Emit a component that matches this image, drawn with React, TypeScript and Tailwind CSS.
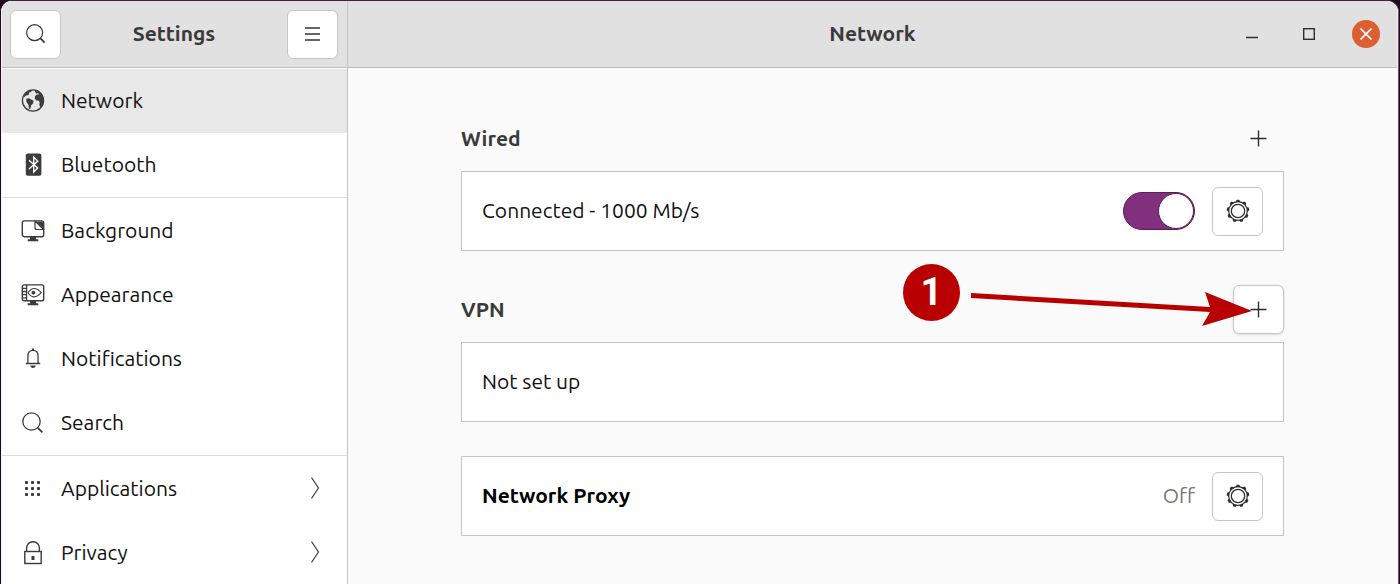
import type { ReactNode } from 'react'

const TOOL_BUTTON =
  'flex h-[49px] w-[51px] shrink-0 items-center justify-center rounded-md border border-[#c6c6c6] bg-white text-[#333] hover:bg-gray-50'

function SearchIcon({ className }: { className?: string }) {
  return (
    <svg viewBox="0 0 24 24" className={className} fill="none" stroke="currentColor">
      <circle cx="10.5" cy="10.5" r="8.7" strokeWidth="1.3" />
      <path d="M16.8 16.8l4.6 4.6" strokeWidth="1.8" />
    </svg>
  )
}

function GlobeIcon() {
  return (
    <svg viewBox="0 0 24 24" className="h-6 w-6" fill="none">
      <circle cx="12" cy="11.5" r="10.6" stroke="currentColor" strokeWidth="1.3" />
      <path
        fill="currentColor"
        d="M3 6.7C4.7 3.5 8 1.2 11.6 .9L10 2.7 7.8 4l.4 1.2-1.6 1.1-2.1.4L2.6 9.1zM5.2 9.7l2.6-.4 1.9.9 2.9 1.6-.6 2.8-1.8 1.7-1 3.9-1.3-.7-.5-3.9-1.9-2.4zM14 1.5l2.8.4c2.3 1.2 4.2 3 5.1 5.3l.8 4-.8 4.5-2.2 3-1.4-2.6.4-2.9-1.3-1.7-2.2.1-1.5-2.3.5-2.4 1.7-1.3 1.9-.1-.3-1.4-2.2.3-1.2-1.4z"
      />
    </svg>
  )
}

function BluetoothIcon() {
  return (
    <svg viewBox="0 0 24 24" className="h-6 w-6" fill="none">
      <rect x="4.8" y="0.4" width="15.6" height="22.4" rx="2" fill="currentColor" />
      <path d="M8 7.3l8.7 7.8-4 4V4.1l4 4L8 15.9" stroke="#fff" strokeWidth="1.4" />
    </svg>
  )
}

function BackgroundIcon() {
  return (
    <svg viewBox="0 0 24 24" className="h-6 w-6" fill="none" stroke="currentColor">
      <rect x="1.3" y="1.9" width="21.4" height="15.8" rx="2" strokeWidth="1.4" />
      <path d="M14 2V8.5q0 2 2 2h6.5z" fill="#fff" strokeWidth="1.2" />
      <path d="M15 2.5l7 7V3.5l-1-1z" fill="currentColor" stroke="none" />
      <path d="M9 18h6v2.3h2.3v2H6.7v-2H9z" fill="currentColor" stroke="none" />
    </svg>
  )
}

function AppearanceIcon() {
  return (
    <svg viewBox="0 0 24 24" className="h-6 w-6" fill="none" stroke="currentColor">
      <rect x="1.3" y="1.9" width="21.4" height="15.8" rx="1.8" strokeWidth="1.4" />
      <path d="M5.6 1.9v15.8M1.3 5.3h4.3M1.3 8.5h4.3M1.3 11.7h4.3M1.3 14.9h4.3" strokeWidth="1.3" />
      <path d="M7 9.7q5.8-8.4 13.2 0q-7.4 8.4-13.2 0z" strokeWidth="1.1" />
      <circle cx="12.4" cy="9.7" r="1.5" fill="currentColor" />
      <path d="M9 18h6v2.3h2.3v2H6.7v-2H9z" fill="currentColor" stroke="none" />
    </svg>
  )
}

function BellIcon() {
  return (
    <svg viewBox="0 0 24 24" className="h-6 w-6" fill="none" stroke="currentColor">
      <path d="M4.8 16.5h14.4M6.9 16.5V8.7c0-3.2 2-5.4 5.1-5.4s5.1 2.2 5.1 5.4v7.8" strokeWidth="1.3" />
      <path d="M12 1.5v2" strokeWidth="2.2" />
      <path d="M9.2 18.5h5.6q-.6 2.5-2.8 2.5t-2.8-2.5z" fill="currentColor" stroke="none" />
    </svg>
  )
}

function AppsIcon() {
  return (
    <svg viewBox="0 0 24 24" className="h-6 w-6" fill="currentColor">
      {[4, 10, 16].map((y) =>
        [4, 10, 16].map((x) => <rect key={`${x}-${y}`} x={x} y={y} width="3" height="3" rx="0.8" />)
      )}
    </svg>
  )
}

function LockIcon() {
  return (
    <svg viewBox="0 0 24 24" className="h-6 w-6" fill="none" stroke="currentColor" strokeWidth="1.4">
      <rect x="3.8" y="10.5" width="16.4" height="12" />
      <path d="M5.6 10.5V7.1a6.4 6.4 0 0 1 12.8 0v3.4" />
      <rect x="10.5" y="15" width="3" height="4" fill="currentColor" stroke="none" />
    </svg>
  )
}

function ChevronIcon() {
  return (
    <svg viewBox="0 0 10 24" className="h-6 w-[10px]" fill="none" stroke="#444" strokeWidth="1.3">
      <path d="M1.5 .5L8.5 11l-7 10.5" />
    </svg>
  )
}

function PlusIcon() {
  return (
    <svg viewBox="0 0 17 17" className="h-[17px] w-[17px]" fill="none" stroke="#2e2e2e" strokeWidth="1.4">
      <path d="M8.5 .5v16M.5 8.5h16" />
    </svg>
  )
}

function GearIcon() {
  const teeth = [0, 40, 80, 120, 160, 200, 240, 280, 320]
  return (
    <svg viewBox="0 0 24 24" className="h-6 w-6" fill="none" stroke="#2e2e2e">
      <circle cx="12" cy="12" r="9.3" strokeWidth="1.2" />
      <circle cx="12" cy="12" r="6.7" strokeWidth="1.3" />
      {teeth.map((a) => (
        <path key={a} d="M9.6 2.9L10.8 .7h2.4l1.2 2.2z" fill="#2e2e2e" stroke="none" transform={`rotate(${a} 12 12)`} />
      ))}
    </svg>
  )
}

type Item = { label: string; icon: ReactNode; active?: boolean; more?: boolean }

const groups: Item[][] = [
  [
    { label: 'Network', icon: <GlobeIcon />, active: true },
    { label: 'Bluetooth', icon: <BluetoothIcon /> },
  ],
  [
    { label: 'Background', icon: <BackgroundIcon /> },
    { label: 'Appearance', icon: <AppearanceIcon /> },
    { label: 'Notifications', icon: <BellIcon /> },
    { label: 'Search', icon: <SearchIcon className="h-6 w-6" /> },
  ],
  [
    { label: 'Applications', icon: <AppsIcon />, more: true },
    { label: 'Privacy', icon: <LockIcon />, more: true },
  ],
]

function Sidebar() {
  return (
    <aside className="flex w-[346px] shrink-0 flex-col border-r border-[#c4c4c4] bg-white">
      <header className="flex h-[67px] items-center justify-between border-b border-[#bdbdbd] bg-[#e1e1e1] pr-[9px] pl-2">
        <button aria-label="Search" className={TOOL_BUTTON}>
          <SearchIcon className="h-[22px] w-[22px]" />
        </button>
        <h1 className="text-[21px] font-bold text-[#3a3a3a]">Settings</h1>
        <button aria-label="Menu" className={TOOL_BUTTON}>
          <svg viewBox="0 0 15 14" className="h-[14px] w-[15px]" stroke="currentColor" strokeWidth="1.3">
            <path d="M0 1h15M0 7h15M0 13h15" />
          </svg>
        </button>
      </header>
      <nav className="divide-y divide-[#dcdcdc]">
        {groups.map((items, i) => (
          <ul key={i} className="pt-px">
            {items.map((item) => (
              <li key={item.label}>
                <a
                  href="#"
                  className={`flex h-16 items-center gap-4 pr-[27px] pl-[19px] text-[21px] text-[#111] ${item.active ? 'bg-[#e8e8e8]' : 'hover:bg-gray-50'}`}
                >
                  <span className="text-[#3c3c3c]">{item.icon}</span>
                  <span className="flex-1">{item.label}</span>
                  {item.more && <ChevronIcon />}
                </a>
              </li>
            ))}
          </ul>
        ))}
      </nav>
    </aside>
  )
}

function TitleBar() {
  return (
    <header className="grid h-[67px] grid-cols-[1fr_auto_1fr] items-center border-b border-[#bdbdbd] bg-[#e1e1e1] px-[17px]">
      <h2 className="col-start-2 text-[21px] font-bold text-[#3a3a3a]">Network</h2>
      <div className="flex items-center justify-end gap-[29px]">
        <button aria-label="Minimize" className="flex h-7 w-7 items-center justify-center">
          <svg viewBox="0 0 12 12" className="h-3 w-3" stroke="#2e2e2e" strokeWidth="1.5">
            <path d="M0 9.5h12" />
          </svg>
        </button>
        <button aria-label="Maximize" className="flex h-7 w-7 items-center justify-center">
          <svg viewBox="0 0 12 12" className="h-3 w-3" fill="none" stroke="#2e2e2e" strokeWidth="1.4">
            <rect x="0.7" y="0.7" width="10.6" height="10.6" />
          </svg>
        </button>
        <button aria-label="Close" className="flex h-7 w-7 items-center justify-center rounded-full bg-[#dd5e33]">
          <svg viewBox="0 0 12 12" className="h-3 w-3" stroke="#fff" strokeWidth="1.6">
            <path d="M.5 .5l11 11M11.5 .5l-11 11" />
          </svg>
        </button>
      </div>
    </header>
  )
}

function Card({ children }: { children: ReactNode }) {
  return (
    <div className="flex h-20 items-center border border-[#c4c4c4] bg-white px-5 text-[21px] text-[#111]">
      {children}
    </div>
  )
}

function StepArrow() {
  return (
    <div className="pointer-events-none absolute -top-[21px] right-8 flex items-start gap-[11px]">
      <span className="flex h-[57px] w-[57px] items-center justify-center rounded-full bg-[#b90000] font-[family-name:'Roboto','Inter',sans-serif] text-[38px] font-bold text-white">
        1
      </span>
      <svg viewBox="0 0 281 63" className="h-[63px] w-[281px]" fill="#b90000">
        <path d="M0 29l239 14-5-15 47 19-50 15 8-14L0 34z" />
      </svg>
    </div>
  )
}

export default function App() {
  return (
    <div className="min-h-screen bg-[#210a1f] pr-px font-[family-name:'Ubuntu','Noto_Sans',sans-serif]">
      <div className="flex min-h-screen overflow-hidden rounded-t-xl border-t border-r border-l border-t-[#3b2238] border-r-[#6d5069] border-l-[#210a1f] bg-[#fafafa]">
        <div className="flex min-w-0 flex-1 border-r border-l border-[#f3f3f3]">
          <Sidebar />
          <main className="min-w-0 flex-1">
            <TitleBar />
            <div className="mx-auto max-w-[823px] pt-[46px] pb-12">
              <section>
                <div className="mb-2 flex h-[49px] items-center justify-between">
                  <h3 className="text-[21px] font-bold text-[#3a3a3a]">Wired</h3>
                  <button aria-label="Add wired connection" className="flex h-[49px] w-[51px] items-center justify-center">
                    <PlusIcon />
                  </button>
                </div>
                <Card>
                  <label htmlFor="wired" className="flex-1">
                    Connected - 1000 Mb/s
                  </label>
                  <input
                    id="wired"
                    type="checkbox"
                    role="switch"
                    defaultChecked
                    className="mr-[17px] flex h-[38px] w-[72px] appearance-none items-center rounded-full border border-[#5a1c55] bg-gray-300 before:h-9 before:w-9 before:rounded-full before:border before:border-[#5a1c55] before:bg-white checked:justify-end checked:bg-[#80307c]"
                  />
                  <button aria-label="Wired settings" className={TOOL_BUTTON}>
                    <GearIcon />
                  </button>
                </Card>
              </section>

              <section className="mt-[34px]">
                <div className="relative mb-2 flex h-[49px] items-center justify-between">
                  <h3 className="text-[21px] font-bold text-[#3a3a3a]">VPN</h3>
                  <button aria-label="Add VPN" className={`${TOOL_BUTTON} shadow-sm`}>
                    <PlusIcon />
                  </button>
                  <StepArrow />
                </div>
                <Card>Not set up</Card>
              </section>

              <section className="mt-[34px]">
                <Card>
                  <h3 className="flex-1 font-bold text-black">Network Proxy</h3>
                  <span className="mr-[17px] text-[#777]">Off</span>
                  <button aria-label="Proxy settings" className={TOOL_BUTTON}>
                    <GearIcon />
                  </button>
                </Card>
              </section>
            </div>
          </main>
        </div>
      </div>
    </div>
  )
}
